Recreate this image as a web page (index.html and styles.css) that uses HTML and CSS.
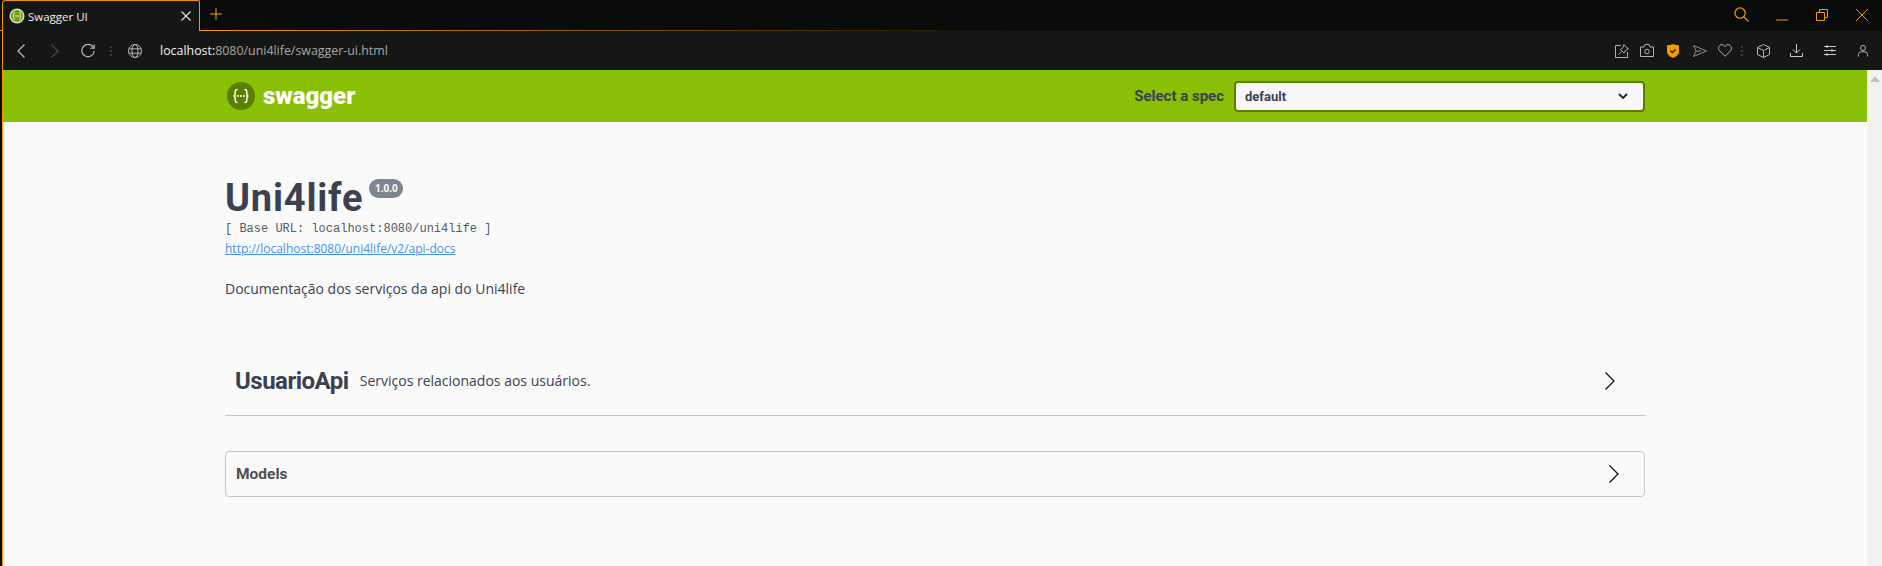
FILE: index.html
```html
<!DOCTYPE html>
<html lang="en">

<head>
    <meta charset="UTF-8">
    <meta name="viewport" content="width=device-width, initial-scale=1.0">
    <title>Swagger UI</title>
    <link rel="stylesheet" href="styles.css">
</head>

<body>
    <div class="tab-strip">
        <div class="tab">
            <svg class="favicon" width="16" height="16" viewBox="0 0 16 16">
                <circle cx="8" cy="8" r="7.500" fill="#d8e8b8"/>
                <circle cx="8" cy="8" r="6" fill="#6d9a12"/>
                <path d="M6 4Q4.800 4 4.800 5.500V7Q4.800 8 4 8Q4.800 8 4.800 9V10.500Q4.800 12 6 12M10 4Q11.200 4 11.200 5.500V7Q11.200 8 12 8Q11.200 8 11.200 9V10.500Q11.200 12 10 12M6 8H10" fill="none" stroke="#e8f2d0" stroke-width="1"/>
            </svg>
            <span class="tab-title">Swagger UI</span>
            <svg class="tab-close" width="10" height="10" viewBox="0 0 10 10">
                <path d="M.500.500 9.500 9.500M9.500.500.500 9.500" stroke="#e6e6e6" stroke-width="1.100"/>
            </svg>
        </div>
        <svg class="new-tab" width="12" height="12" viewBox="0 0 12 12">
            <path d="M6 0V12M0 6H12" stroke="#f59a00" stroke-width="1"/>
        </svg>
        <div class="window-controls">
            <svg width="15" height="15" viewBox="0 0 16 16">
                <circle cx="6.500" cy="6.500" r="5.500" fill="none" stroke="#f59a00" stroke-width="1.300"/>
                <path d="M10.500 10.500 15.500 15.500" stroke="#f59a00" stroke-width="1.300"/>
            </svg>
            <svg width="12" height="2" viewBox="0 0 12 2" class="win-min">
                <path d="M0 1H12" stroke="#f59a00" stroke-width="1"/>
            </svg>
            <svg width="12" height="12" viewBox="0 0 12 12" class="win-restore">
                <path d="M.500 3.500H8.500V11.500H.500ZM3.500 3.500V.500H11.500V8.500H8.500" fill="none" stroke="#f59a00" stroke-width="1"/>
            </svg>
            <svg width="12" height="12" viewBox="0 0 12 12" class="win-close">
                <path d="M0 0 12 12M12 0 0 12" stroke="#f59a00" stroke-width="1"/>
            </svg>
        </div>
    </div>

    <div class="toolbar">
        <svg class="nav-back" width="8" height="14" viewBox="0 0 8 14">
            <path d="M7.500.500 1 7 7.500 13.500" fill="none" stroke="#bcbcbc" stroke-width="1.200"/>
        </svg>
        <svg class="nav-forward" width="8" height="14" viewBox="0 0 8 14">
            <path d="M.500.500 7 7 .500 13.500" fill="none" stroke="#4c4c4c" stroke-width="1.200"/>
        </svg>
        <svg class="nav-reload" width="14" height="14" viewBox="0 0 14 14">
            <path d="M12.300 3.300A6.200 6.200 0 1 0 13.200 7" fill="none" stroke="#bcbcbc" stroke-width="1.200"/>
            <path d="M13.200.500V4.200H9.500" fill="none" stroke="#bcbcbc" stroke-width="1.200"/>
        </svg>
        <div class="grip"></div>
        <svg class="nav-globe" width="14" height="14" viewBox="0 0 14 14">
            <g fill="none" stroke="#b4b4b4" stroke-width="1">
                <circle cx="7" cy="7" r="6.500"/>
                <ellipse cx="7" cy="7" rx="3" ry="6.500"/>
                <path d="M1 4.800H13M1 9.200H13"/>
            </g>
        </svg>
        <div class="address"><span class="host">localhost:</span>8080/uni4life/swagger-ui.html</div>
        <div class="tools">
            <svg width="14" height="14" viewBox="0 0 14 14">
                <path d="M6 1.500H.500V13.500H12.500V8" fill="none" stroke="#b4b4b4" stroke-width="1"/>
                <path d="M9 .500 13.500 5 11.500 5.500 9 9 5.500 5.500 8.500 3ZM6.500 7.500 3.500 10.500" fill="none" stroke="#b4b4b4" stroke-width="1"/>
            </svg>
            <svg width="14" height="13" viewBox="0 0 14 13" class="t-camera">
                <path d="M.500 3H4L5 .500H9L10 3H13.500V12.500H.500Z" fill="none" stroke="#b4b4b4" stroke-width="1"/>
                <circle cx="7" cy="7.500" r="2.300" fill="none" stroke="#b4b4b4" stroke-width="1"/>
            </svg>
            <svg width="12" height="14" viewBox="0 0 12 14" class="t-shield">
                <path d="M6 0Q9 1.200 12 1.200V7.500Q12 11.500 6 14Q0 11.500 0 7.500V1.200Q3 1.200 6 0Z" fill="#f59a00"/>
                <path d="M3.500 6.800 5.300 8.500 8.500 5.500" fill="none" stroke="#1c1c1c" stroke-width="1.300"/>
            </svg>
            <svg width="14" height="12" viewBox="0 0 14 12" class="t-send">
                <path d="M.500.500 13.500 6 .500 11.500 3 6ZM3 6H8" fill="none" stroke="#8e8e8e" stroke-width="1"/>
            </svg>
            <svg width="14" height="13" viewBox="0 0 14 13" class="t-heart">
                <path d="M7 12.300 1.500 6.800C-1 3.500 2 .500 4 .700 5.500.700 6.500 1.700 7 2.700 7.500 1.700 8.500.700 10 .700 12 .500 15 3.500 12.500 6.800Z" fill="none" stroke="#b4b4b4" stroke-width="1"/>
            </svg>
            <div class="grip"></div>
            <svg width="13" height="14" viewBox="0 0 13 14" class="t-box">
                <path d="M6.500.500 12.500 3.500V10.500L6.500 13.500.500 10.500V3.500ZM.500 3.500 6.500 6.500 12.500 3.500M6.500 6.500V13.500" fill="none" stroke="#b4b4b4" stroke-width="1"/>
            </svg>
            <svg width="13" height="13" viewBox="0 0 13 13" class="t-download">
                <path d="M6.500 0V9M3 5.500 6.500 9 10 5.500M.500 9V12.500H12.500V9" fill="none" stroke="#c8c8c8" stroke-width="1"/>
            </svg>
            <svg width="12" height="11" viewBox="0 0 12 11" class="t-sliders">
                <path d="M0 1.500H12M0 5.500H12M0 9.500H12M3 0V3M8 4V7M3 8V11" fill="none" stroke="#c8c8c8" stroke-width="1"/>
            </svg>
            <svg width="10" height="12" viewBox="0 0 10 12" class="t-user">
                <circle cx="5" cy="3" r="2.500" fill="none" stroke="#b4b4b4" stroke-width="1"/>
                <path d="M.500 11.500V9.500Q.500 7 3 6.800H7Q9.500 7 9.500 9.500V11.500" fill="none" stroke="#b4b4b4" stroke-width="1"/>
            </svg>
        </div>
    </div>

    <div class="viewport">
        <div class="page">
            <header class="topbar">
                <div class="wrapper topbar-inner">
                    <a class="logo">
                        <span class="logo-mark">
                            <svg width="28" height="28" viewBox="0 0 28 28">
                                <circle cx="14" cy="14" r="14" fill="#5b7f00"/>
                                <path d="M10.500 7.500Q8.200 7.500 8.200 9.800V12.500Q8.200 14 6.500 14Q8.200 14 8.200 15.500V18.200Q8.200 20.500 10.500 20.500M17.500 7.500Q19.800 7.500 19.800 9.800V12.500Q19.800 14 21.500 14Q19.800 14 19.800 15.500V18.200Q19.800 20.500 17.500 20.500" fill="none" stroke="#fff" stroke-width="1.500"/>
                                <circle cx="11" cy="14" r="1" fill="#fff"/>
                                <circle cx="14" cy="14" r="1" fill="#fff"/>
                                <circle cx="17" cy="14" r="1" fill="#fff"/>
                            </svg>
                        </span>
                        <span class="logo-text">swagger</span>
                    </a>
                    <div class="spec-select">
                        <span class="spec-label">Select a spec</span>
                        <div class="select-box">
                            <span>default</span>
                            <svg width="10" height="6" viewBox="0 0 10 6">
                                <path d="M1 1 5 5 9 1" fill="none" stroke="#222" stroke-width="1.800"/>
                            </svg>
                        </div>
                    </div>
                </div>
            </header>

            <div class="wrapper">
                <section class="info">
                    <h2 class="title">Uni4life<span class="version">1.0.0</span></h2>
                    <div class="base-url">[ Base URL: localhost:8080/uni4life ]</div>
                    <a class="docs-link">http://localhost:8080/uni4life/v2/api-docs</a>
                    <p class="description">Documentação dos serviços da api do Uni4life</p>
                </section>

                <div class="tag-row">
                    <h4 class="tag-name">UsuarioApi</h4>
                    <span class="tag-desc">Serviços relacionados aos usuários.</span>
                    <svg class="arrow" width="10" height="18" viewBox="0 0 10 18">
                        <path d="M.500.500 9 9 .500 17.500" fill="none" stroke="#111" stroke-width="1.300"/>
                    </svg>
                </div>

                <div class="models">
                    <span class="models-title">Models</span>
                    <svg class="arrow" width="10" height="18" viewBox="0 0 10 18">
                        <path d="M.500.500 9 9 .500 17.500" fill="none" stroke="#111" stroke-width="1.300"/>
                    </svg>
                </div>
            </div>
        </div>
        <div class="scrollbar">
            <svg width="10" height="6" viewBox="0 0 10 6">
                <path d="M0 6 5 0 10 6Z" fill="#c4c4c4"/>
            </svg>
        </div>
    </div>
</body>

</html>
```

FILE: styles.css
```css
* {
    box-sizing: border-box;
}

html,
body {
    height: 100%;
}

body {
    margin: 0;
    background-color: #0a0b0b;
    font-family: "Open Sans", sans-serif;
    overflow: hidden;
    display: flex;
    flex-direction: column;
}

svg {
    display: block;
    flex: none;
}

/* browser chrome */
.tab-strip {
    height: 31px;
    background: linear-gradient(to right, #f59a00 200px, #0a0b0b 1020px) bottom / 100% 1px no-repeat, #0a0b0b;
    display: flex;
    align-items: flex-start;
}

.tab {
    width: 198px;
    height: 31px;
    margin-left: 2px;
    background-color: #151717;
    border: 1px solid #f59a00;
    border-bottom: none;
    border-top-left-radius: 4px;
    border-top-right-radius: 2px;
    display: flex;
    align-items: center;
    padding: 0 8px 0 6px;
    color: #f2f2f2;
    font-size: 11.5px;
}

.tab-title {
    margin-left: 3px;
    flex: 1;
}

.new-tab {
    margin: 8px 0 0 10px;
}

.window-controls {
    margin-left: auto;
    display: flex;
    align-items: flex-start;
    padding: 7px 14px 0 0;
}

.win-min {
    margin: 12px 0 0 27px;
}

.win-restore {
    margin: 2px 0 0 28px;
}

.win-close {
    margin: 2px 0 0 28px;
}

.toolbar {
    height: 39px;
    margin-left: 2px;
    border-left: 1px solid #f59a00;
    background-color: #151717;
    display: flex;
    align-items: center;
    padding-left: 14px;
}

.nav-forward {
    margin-left: 26px;
}

.nav-reload {
    margin-left: 22px;
}

.grip {
    width: 2px;
    height: 10px;
    margin-left: 15px;
    background-image: repeating-linear-gradient(#3a3a3a 0 2px, transparent 2px 4px);
}

.nav-globe {
    margin-left: 16px;
}

.address {
    margin-left: 18px;
    font-size: 12.4px;
    color: #a8a8a8;
    white-space: nowrap;
}

.host {
    color: #f2f2f2;
}

.tools {
    margin-left: auto;
    display: flex;
    align-items: center;
    padding-right: 14px;
}

.t-camera {
    margin-left: 11px;
}

.t-shield {
    margin-left: 13px;
}

.t-send {
    margin-left: 14px;
}

.t-heart {
    margin-left: 11px;
}

.tools .grip {
    margin-left: 9px;
}

.t-box {
    margin-left: 14px;
}

.t-download {
    margin-left: 20px;
}

.t-sliders {
    margin-left: 21px;
}

.t-user {
    margin-left: 22px;
}

/* page */
.viewport {
    flex: 1;
    display: flex;
    margin-left: 2px;
    border-left: 1px solid #f59a00;
    min-height: 0;
}

.page {
    flex: 1;
    background-color: #fafafa;
    color: #3b4151;
}

.wrapper {
    width: 1420px;
    margin: 0 auto;
}

.scrollbar {
    width: 15px;
    background-color: #f1f1f1;
    padding: 6px 2px 0 3px;
}

.topbar {
    height: 52px;
    background-color: #89bf04;
}

.topbar-inner {
    height: 100%;
    display: flex;
    align-items: center;
    justify-content: space-between;
}

.logo {
    display: flex;
    align-items: center;
    margin-left: 2px;
}

.logo-text {
    margin-left: 8px;
    color: #fff;
    font-family: Roboto, sans-serif;
    font-size: 24px;
    font-weight: 900;
    line-height: 28px;
}

.spec-select {
    display: flex;
    align-items: center;
}

.spec-label {
    font-family: Roboto, sans-serif;
    font-size: 15px;
    font-weight: 700;
    color: #3b4151;
}

.select-box {
    width: 411px;
    height: 31px;
    margin-left: 10px;
    border: 2px solid #5b7f00;
    border-radius: 4px;
    background-color: #f7f7f7;
    display: flex;
    align-items: center;
    justify-content: space-between;
    padding: 0 15px 0 9px;
    font-family: Roboto, sans-serif;
    font-size: 13px;
    font-weight: 700;
    color: #3b4151;
}

.info {
    padding-top: 55px;
    margin-bottom: 60px;
}

.title {
    margin: 0;
    font-family: Roboto, sans-serif;
    font-size: 38px;
    font-weight: 700;
    letter-spacing: 0.8px;
    line-height: 42px;
    display: flex;
    align-items: flex-start;
}

.version {
    margin: 2px 0 0 6px;
    width: 34px;
    height: 19px;
    line-height: 19px;
    text-align: center;
    border-radius: 10px;
    background-color: #7d8492;
    color: #fafafa;
    font-family: "Open Sans", sans-serif;
    font-size: 10px;
    font-weight: 700;
    letter-spacing: 0;
}

.base-url {
    margin-top: 3px;
    font-family: "Liberation Mono", monospace;
    font-size: 12px;
    line-height: 15px;
    color: #555a66;
}

.docs-link {
    display: block;
    margin-top: 4px;
    font-size: 12px;
    line-height: 16px;
    color: #4990e2;
    text-decoration: underline;
}

.description {
    margin: 22px 0 0;
    font-size: 14px;
    line-height: 19px;
}

.tag-row {
    height: 58px;
    border-bottom: 1px solid #c3c5cb;
    display: flex;
    align-items: center;
    padding: 0 0 12px 10px;
}

.tag-name {
    margin: 0;
    font-family: Roboto, sans-serif;
    font-size: 24px;
    font-weight: 700;
    letter-spacing: -0.5px;
}

.tag-desc {
    margin-left: 11px;
    font-size: 14px;
    flex: 1;
}

.tag-row .arrow {
    margin-right: 30px;
}

.models {
    height: 46px;
    margin-top: 35px;
    border: 1px solid #c3c5cb;
    border-radius: 4px;
    display: flex;
    align-items: center;
    justify-content: space-between;
    padding: 0 25px 0 10px;
}

.models-title {
    font-family: Roboto, sans-serif;
    font-size: 15.5px;
    font-weight: 700;
    color: #505050;
}
```
